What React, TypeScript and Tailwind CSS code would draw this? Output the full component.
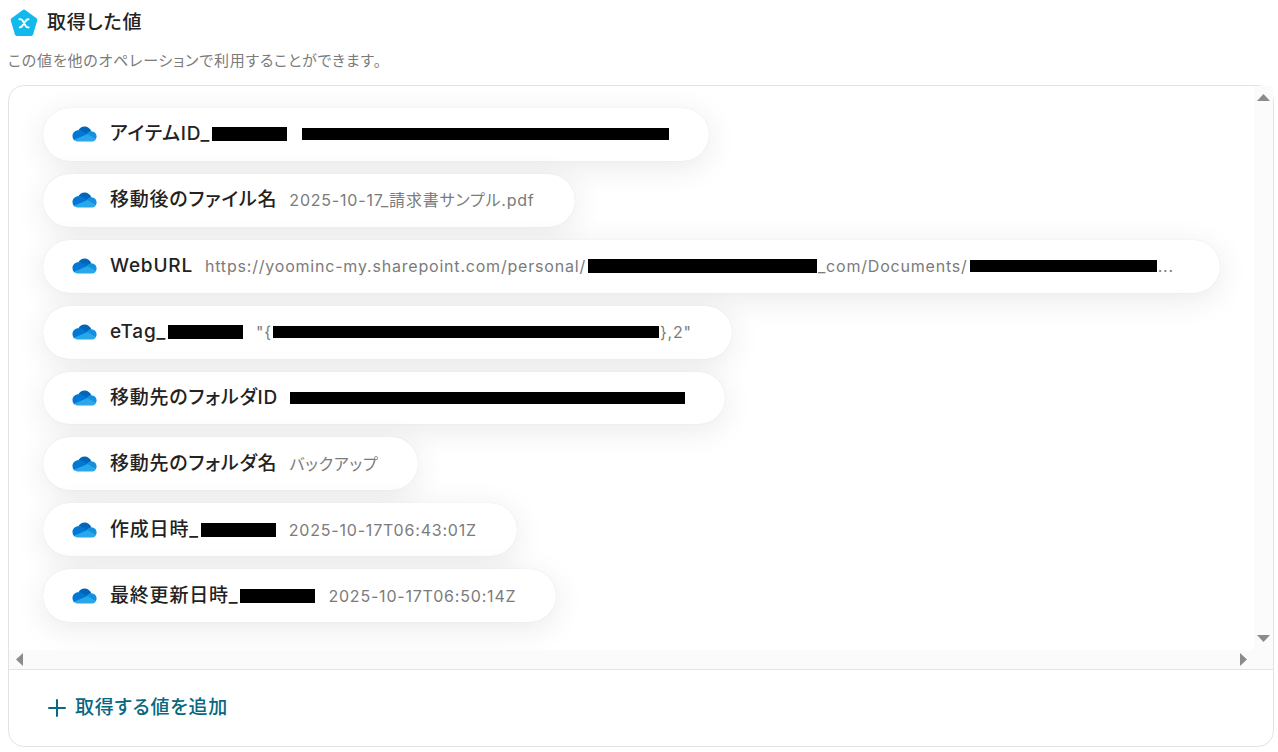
import React from 'react';

type ValuePart = string | { mask: string };

type OutputValue = {
  id: string;
  label: ValuePart[];
  value: ValuePart[];
  truncated?: boolean;
};

const labelMask = 'mr-px ml-[2px] h-[14px] w-[75px]';

const OUTPUT_VALUES: OutputValue[] = [
  { id: 'item-id', label: ['アイテムID_', { mask: labelMask }], value: [{ mask: 'ml-[2px] h-3 w-[367px]' }] },
  { id: 'file-name', label: ['移動後のファイル名'], value: ['2025-10-17_請求書サンプル.pdf'] },
  {
    id: 'web-url',
    label: ['WebURL'],
    value: [
      'https://yoominc-my.sharepoint.com/personal/',
      { mask: 'mr-px ml-[2px] h-[14px] w-[229px]' },
      '_com/Documents/',
      { mask: 'mr-px ml-[2px] h-3 w-[187px]' },
      '...'
    ],
    truncated: true
  },
  {
    id: 'etag',
    label: ['eTag_', { mask: labelMask }],
    value: ['"{', { mask: 'mr-px ml-px h-3 w-[386px]' }, '},2"']
  },
  { id: 'folder-id', label: ['移動先のフォルダID'], value: [{ mask: 'h-3 w-[395px]' }] },
  { id: 'folder-name', label: ['移動先のフォルダ名'], value: ['バックアップ'] },
  { id: 'created-at', label: ['作成日時_', { mask: labelMask }], value: ['2025-10-17T06:43:01Z'] },
  { id: 'updated-at', label: ['最終更新日時_', { mask: labelMask }], value: ['2025-10-17T06:50:14Z'] }
];

const scrollButtonClass = 'flex items-center justify-center text-[#8b8b8b]';

function YoomIcon() {
  return (
    <svg viewBox="0 0 28 28" className="h-7 w-7 shrink-0" aria-hidden="true">
      <path
        d="M14 2.500 25.300 10.900 21.200 25H6.800L2.700 10.900Z"
        fill="#12b9ed"
        stroke="#12b9ed"
        strokeWidth="4"
        strokeLinejoin="round"
      />
      <path
        d="M9.400 10.200c1.600-.3 2.500.3 3.300 1.600l2.900 5c.8 1.300 1.600 1.900 3.100 1.600M18.500 10.200c-1.300 0-1.900.4-2.600 1.400L12.200 16.900c-.7 1-1.300 1.500-2.500 1.500"
        fill="none"
        stroke="#fff"
        strokeWidth="1.900"
        strokeLinecap="round"
      />
    </svg>
  );
}

function OneDriveIcon() {
  return (
    <svg viewBox="0 0 26 17" className="h-4 w-[25px] shrink-0" preserveAspectRatio="none" aria-hidden="true">
      <path d="M6.600 4.600C8 1.900 10.300.400 13 .400c3.400 0 6.200 2.200 7.100 5.200L15 9.500Z" fill="#0364b8" />
      <path d="M6.600 4.600c2-.2 3.500.4 5 1.300l5.100 3L2.200 15.300A6 6 0 0 1 .500 10.700c0-3.300 2.700-6.100 6.100-6.100Z" fill="#0078d4" />
      <path d="M15.300 8.700c1.300-2.400 2.900-3.200 4.800-3.100 3.200.100 5.500 2.500 5.500 5.500 0 1.100-.3 2.200-.9 3L16 9.700Z" fill="#1490df" />
      <path d="m16.200 8.600 8.700 5.400c-1 1.700-2.600 2.600-4.500 2.600H6.600c-1.800 0-3.400-.7-4.500-1.900Z" fill="#28a8ea" />
    </svg>
  );
}

function Parts({ parts }: { parts: ValuePart[] }) {
  return (
    <>
      {parts.map((part, index) =>
        typeof part === 'string' ? (
          <span key={index}>{part}</span>
        ) : (
          <span key={index} className={`shrink-0 bg-black ${part.mask}`} />
        )
      )}
    </>
  );
}

function ValueChip({ item }: { item: OutputValue }) {
  return (
    <li
      className={`flex w-max items-center rounded-full bg-white pl-[29px] shadow-[0_0_1px_rgba(0,0,0,0.12),0_6px_32px_rgba(0,0,0,0.09)] ${item.truncated ? 'pr-[46px]' : 'pr-10'}`}
    >
      <OneDriveIcon />
      <span className="ml-[13px] flex items-center text-[19px] leading-7 font-medium text-[#222]">
        <Parts parts={item.label} />
      </span>
      <span className="ml-3 flex items-center text-base text-[#7b7b7b]">
        <Parts parts={item.value} />
      </span>
    </li>
  );
}

export default function App() {
  return (
    <main
      lang="ja"
      className="bg-white pt-[9px] pr-1 pb-1 pl-2 font-['Inter','Noto_Sans_CJK_JP',sans-serif] tracking-wider text-[#222] [font-feature-settings:'palt']"
    >
      <header>
        <h1 className="flex h-7 items-center gap-[9px] pl-[2px] text-[19px] leading-7 font-medium">
          <YoomIcon />
          <span>取得した値</span>
        </h1>
        <p className="mt-3 text-[15px] leading-6 text-[#7b7b7b]">この値を他のオペレーションで利用することができます。</p>
      </header>

      <section className="mt-3 rounded-2xl border border-[#e3e3e3]">
        <div className="grid grid-cols-[1fr_19px] border-b border-[#e3e3e3]">
          <ul className="grid h-[564px] auto-rows-fr gap-[13px] overflow-hidden rounded-tl-2xl pt-[22px] pb-7 pl-[34px]">
            {OUTPUT_VALUES.map((item) => (
              <ValueChip key={item.id} item={item} />
            ))}
          </ul>

          <div className="flex flex-col justify-between bg-[#fbfbfb] py-2">
            <button type="button" aria-label="上へスクロール" className={scrollButtonClass}>
              <svg viewBox="0 0 13 7" className="h-[7px] w-[13px]" fill="currentColor">
                <path d="M6.500 0 13 7H0Z" />
              </svg>
            </button>
            <button type="button" aria-label="下へスクロール" className={scrollButtonClass}>
              <svg viewBox="0 0 13 7" className="h-[7px] w-[13px]" fill="currentColor">
                <path d="M0 0h13L6.500 7Z" />
              </svg>
            </button>
          </div>

          <div className="flex h-[19px] justify-between bg-[#fbfbfb] px-[7px]">
            <button type="button" aria-label="左へスクロール" className={scrollButtonClass}>
              <svg viewBox="0 0 7 13" className="h-[13px] w-[7px]" fill="currentColor">
                <path d="M7 0v13L0 6.500Z" />
              </svg>
            </button>
            <button type="button" aria-label="右へスクロール" className={scrollButtonClass}>
              <svg viewBox="0 0 7 13" className="h-[13px] w-[7px]" fill="currentColor">
                <path d="M0 0v13l7-6.500Z" />
              </svg>
            </button>
          </div>
          <div className="bg-[#fbfbfb]" />
        </div>

        <div className="flex h-[76px] items-center pl-[39px]">
          <button type="button" className="flex items-center gap-[9px] text-[19px] leading-7 font-medium text-[#066882]">
            <svg viewBox="0 0 18 18" className="h-[18px] w-[18px]" aria-hidden="true">
              <path d="M9 1v16M1 9h16" stroke="currentColor" strokeWidth="2" strokeLinecap="round" />
            </svg>
            取得する値を追加
          </button>
        </div>
      </section>
    </main>
  );
}
